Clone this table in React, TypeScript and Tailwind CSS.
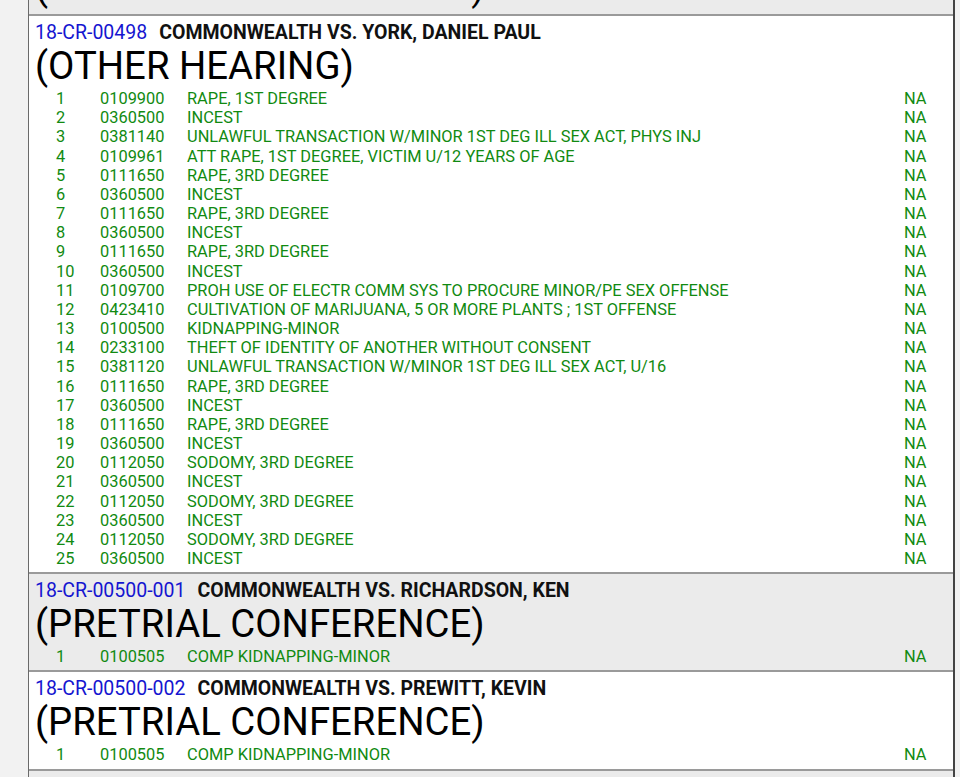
import React from "react";

type Charge = [string, string, string];

type Case = {
  no: string;
  title: string;
  hearing: string;
  gray: boolean;
  charges: Charge[];
};

const cases: Case[] = [
  {
    no: "18-CR-00498",
    title: "COMMONWEALTH VS. YORK, DANIEL PAUL",
    hearing: "(OTHER HEARING)",
    gray: false,
    charges: [
      ["1", "0109900", "RAPE, 1ST DEGREE"],
      ["2", "0360500", "INCEST"],
      ["3", "0381140", "UNLAWFUL TRANSACTION W/MINOR 1ST DEG ILL SEX ACT, PHYS INJ"],
      ["4", "0109961", "ATT RAPE, 1ST DEGREE, VICTIM U/12 YEARS OF AGE"],
      ["5", "0111650", "RAPE, 3RD DEGREE"],
      ["6", "0360500", "INCEST"],
      ["7", "0111650", "RAPE, 3RD DEGREE"],
      ["8", "0360500", "INCEST"],
      ["9", "0111650", "RAPE, 3RD DEGREE"],
      ["10", "0360500", "INCEST"],
      ["11", "0109700", "PROH USE OF ELECTR COMM SYS TO PROCURE MINOR/PE SEX OFFENSE"],
      ["12", "0423410", "CULTIVATION OF MARIJUANA, 5 OR MORE PLANTS ; 1ST OFFENSE"],
      ["13", "0100500", "KIDNAPPING-MINOR"],
      ["14", "0233100", "THEFT OF IDENTITY OF ANOTHER WITHOUT CONSENT"],
      ["15", "0381120", "UNLAWFUL TRANSACTION W/MINOR 1ST DEG ILL SEX ACT, U/16"],
      ["16", "0111650", "RAPE, 3RD DEGREE"],
      ["17", "0360500", "INCEST"],
      ["18", "0111650", "RAPE, 3RD DEGREE"],
      ["19", "0360500", "INCEST"],
      ["20", "0112050", "SODOMY, 3RD DEGREE"],
      ["21", "0360500", "INCEST"],
      ["22", "0112050", "SODOMY, 3RD DEGREE"],
      ["23", "0360500", "INCEST"],
      ["24", "0112050", "SODOMY, 3RD DEGREE"],
      ["25", "0360500", "INCEST"],
    ],
  },
  {
    no: "18-CR-00500-001",
    title: "COMMONWEALTH VS. RICHARDSON, KEN",
    hearing: "(PRETRIAL CONFERENCE)",
    gray: true,
    charges: [["1", "0100505", "COMP KIDNAPPING-MINOR"]],
  },
  {
    no: "18-CR-00500-002",
    title: "COMMONWEALTH VS. PREWITT, KEVIN",
    hearing: "(PRETRIAL CONFERENCE)",
    gray: false,
    charges: [["1", "0100505", "COMP KIDNAPPING-MINOR"]],
  },
];

const CaseBlock = ({ c }: { c: Case }) => {
  return (
    <div
      className={
        "border-t-2 border-[#9a9a9a] pl-[6px] pt-[7px] pb-[4px] " +
        (c.gray ? "bg-[#ebebeb]" : "bg-white")
      }
    >
      <div className="flex items-baseline gap-[12px] text-[19.5px] leading-[19px]">
        <span className="text-[#1515d0]">{c.no}</span>
        <span className="font-bold text-[#111]">{c.title}</span>
      </div>
      <div className="text-[38.3px] leading-[47px] text-black">{c.hearing}</div>
      <div className="text-[16.4px] leading-[19.17px] text-[#118a11]">
        {c.charges.map((ch, i) => (
          <div key={i} className="flex">
            <span className="w-[65px] pl-[21px]">{ch[0]}</span>
            <span className="w-[87px]">{ch[1]}</span>
            <span className="flex-1">{ch[2]}</span>
            <span className="w-[49px]">NA</span>
          </div>
        ))}
      </div>
    </div>
  );
};

export default function App() {
  return (
    <div
      className="h-[777px] overflow-hidden bg-[#f2f2f2] pl-[28px] pr-[5px]"
      style={{ fontFamily: "Roboto, 'Liberation Sans', sans-serif" }}
    >
      <div className="h-full border-l border-r-2 border-l-[#6a6a6a] border-r-[#444] bg-[#ebebeb]">
        {/* tail of the previous case, scrolled off */}
        <div className="h-[14px] overflow-hidden bg-[#ebebeb] pl-[6px] flex flex-col justify-end pb-[4px]">
          <div className="text-[38.3px] leading-[47px] text-black">(PRETRIAL CONFERENCE)</div>
        </div>
        {cases.map((c) => (
          <CaseBlock key={c.no} c={c} />
        ))}
        <div className="border-t-2 border-[#9a9a9a] h-[40px] bg-[#ebebeb]" />
      </div>
    </div>
  );
}
